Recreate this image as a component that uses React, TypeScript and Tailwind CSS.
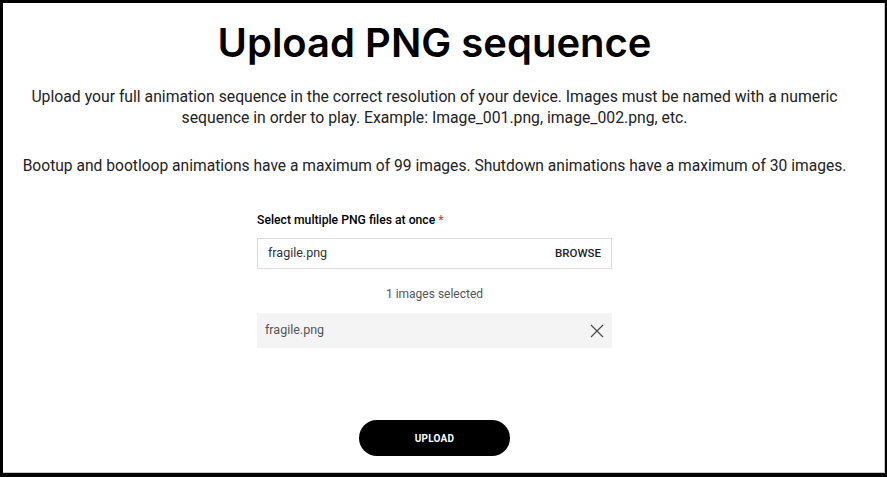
import React from "react";

const App: React.FC = () => {
  return (
    <div className="h-[477px] w-[887px] bg-black pl-[3px] pt-[3px] pr-[2px] pb-[4px]">
      <div className="h-full w-full border-r border-b border-[#c8c8c8] bg-white pr-[18px] font-['Roboto',sans-serif] text-[#222]">
        <div className="flex flex-col items-center">
          <h1 className="mt-[16px] font-['Inter',sans-serif] text-[40px] font-semibold leading-[48px] tracking-normal text-black">
            Upload PNG sequence
          </h1>
          <p className="mt-[19px] w-[840px] text-center text-[15.75px] leading-[21px]">
            Upload your full animation sequence in the correct resolution of your device. Images must be named with a numeric
            sequence in order to play. Example: Image_001.png, image_002.png, etc.
          </p>
          <p className="mt-[28px] text-center text-[15.6px] leading-[21px] whitespace-nowrap">
            Bootup and bootloop animations have a maximum of 99 images. Shutdown animations have a maximum of 30 images.
          </p>

          <div className="mt-[34px] w-[355px]">
            <label className="block text-[12.2px] font-medium leading-[18px] text-black">
              Select multiple PNG files at once <span className="text-[#e0403a]">*</span>
            </label>
            <div className="mt-[9px] flex h-[31px] items-center justify-between border border-[#dcdcdc] bg-white pl-[10px] pr-[10px]">
              <span className="text-[12.5px] text-[#333]">fragile.png</span>
              <span className="text-[11.5px] font-medium text-[#222]">BROWSE</span>
            </div>
            <p className="mt-[16px] text-center text-[12px] leading-[18px] text-[#555]">1 images selected</p>
            <div className="mt-[10px] flex h-[35px] items-center justify-between bg-[#f4f4f4] pl-[8px] pr-[8px]">
              <span className="text-[12.5px] text-[#555]">fragile.png</span>
              <svg width="14" height="14" viewBox="0 0 14 14" fill="none" stroke="#444" strokeWidth="1.1">
                <path d="M1 1L13 13M13 1L1 13" />
              </svg>
            </div>
          </div>

          <button className="mt-[72px] flex h-[36px] w-[151px] items-center justify-center rounded-full bg-black text-[10px] font-bold tracking-[0.2px] text-white">
            UPLOAD
          </button>
        </div>
      </div>
    </div>
  );
};

export default App;
